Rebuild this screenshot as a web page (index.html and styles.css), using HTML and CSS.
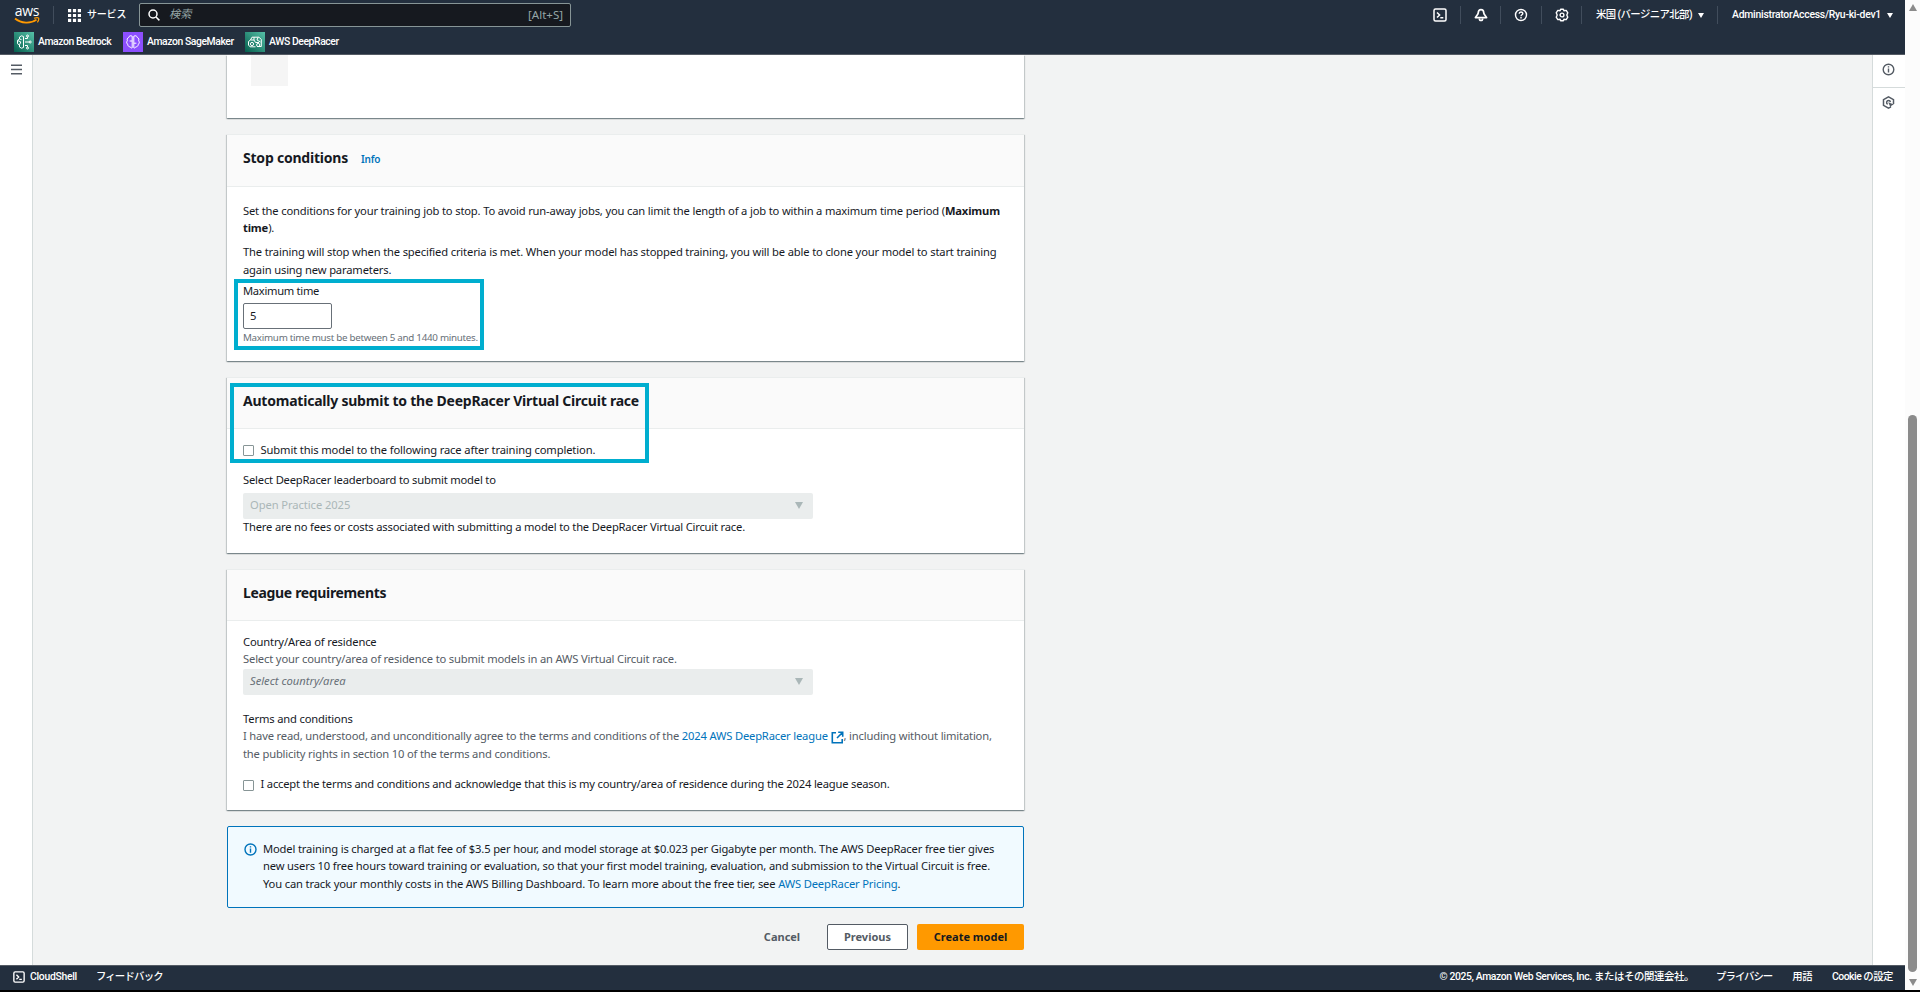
FILE: index.html
```
<!DOCTYPE html>
<html lang="ja">
<head>
    <meta charset="UTF-8" />
    <meta name="viewport" content="width=device-width, initial-scale=1.0"/>
    <title>AWS DeepRacer</title>
    <link rel="stylesheet" href="styles.css">
</head>
<body>
<div class="window">
    <div class="app">
        <header class="topbar">
            <div class="topbar-row">
                <a class="logo">
                    <span class="logo-text">aws</span>
                    <svg class="logo-smile" viewBox="0 0 26 8" fill="none" stroke="#f90">
                        <path d="M1 1.5C7 6.6 17 6.8 22.5 2.6" stroke-width="1.8"/>
                        <path d="M20 1.2C22 .6 24 .5 24.6 1.1C25 1.8 24.3 4 23.4 5.4" stroke-width="1.2"/>
                    </svg>
                </a>
                <span class="divider"></span>
                <a class="services">
                    <svg width="13" height="13" viewBox="0 0 13 13" fill="#fff">
                        <path d="M0 0h3.2v3.2H0zM4.9 0h3.2v3.2H4.9zM9.8 0H13v3.2H9.8zM0 4.9h3.2v3.2H0zM4.9 4.9h3.2v3.2H4.9zM9.8 4.9H13v3.2H9.8zM0 9.8h3.2V13H0zM4.9 9.8h3.2V13H4.9zM9.8 9.8H13V13H9.8z"/>
                    </svg>
                    <span>サービス</span>
                </a>
                <div class="search">
                    <svg width="12" height="12" viewBox="0 0 12 12" fill="none" stroke="#fff" stroke-width="1.5">
                        <circle cx="5" cy="5" r="4"/>
                        <path d="M8 8l3.4 3.4"/>
                    </svg>
                    <span class="search-placeholder">検索</span>
                    <span class="search-key">[Alt+S]</span>
                </div>
                <div class="tools">
                    <a class="tool">
                        <svg width="14" height="14" viewBox="0 0 14 14" fill="none" stroke="#fff" stroke-width="1.5">
                            <rect x="1" y="1" width="12" height="12" rx="1.5"/>
                            <path d="M4 4.5L6.6 7L4 9.5M7.3 9.7H10.3"/>
                        </svg>
                    </a>
                    <a class="tool tool-bell">
                        <svg width="14" height="14" viewBox="0 0 14 14" fill="none" stroke="#fff" stroke-width="1.7">
                            <path d="M7 1.6C5 1.6 4.3 3 4.3 4.6C4.3 6.6 2.6 7.4 1.4 9.6H12.6C11.4 7.4 9.7 6.6 9.7 4.6C9.7 3 9 1.6 7 1.6Z" stroke-linejoin="round"/>
                            <path d="M5.4 10.4C5.4 13.2 8.6 13.2 8.6 10.4"/>
                        </svg>
                    </a>
                    <a class="tool">
                        <svg width="14" height="14" viewBox="0 0 14 14" fill="none" stroke="#fff" stroke-width="1.4">
                            <circle cx="7" cy="7" r="5.5"/>
                            <path d="M5.2 5.7C5.2 3.4 8.8 3.4 8.8 5.6C8.8 6.8 7 6.8 7 8.2M7 9.1V10.4"/>
                        </svg>
                    </a>
                    <a class="tool tool-gear">
                        <svg width="14" height="14" viewBox="0 0 14 14" fill="none" stroke="#fff" stroke-width="1.4" stroke-linejoin="round">
                            <path d="M5.6 1.2H8.4L8.9 2.7L11.2 2.4L12.8 4.8L11.8 7L12.8 9.2L11.2 11.6L8.9 11.3L8.4 12.8H5.6L5.1 11.3L2.8 11.6L1.2 9.2L2.2 7L1.2 4.8L2.8 2.4L5.1 2.7Z"/>
                            <circle cx="7" cy="7" r="1.9"/>
                        </svg>
                    </a>
                    <a class="menu menu-region"><span>米国 (バージニア北部)</span><i class="caret"></i></a>
                    <a class="menu menu-account"><span>AdministratorAccess/Ryu-ki-dev1</span><i class="caret"></i></a>
                </div>
            </div>
            <div class="favorites">
                <a class="favorite bedrock">
                    <svg class="service-icon service-green" viewBox="0 0 20 20" fill="none" stroke="#fff" stroke-width="1">
                        <path d="M9.5 4.5L7.5 3.8L5.5 5V7L3.5 8.3V11.7L5.5 13V15L7.5 16.2L9.5 15.5ZM3.8 8.5L6.8 10L5.5 12.8M5.5 7L7.5 7.6M11 6.5H13.5V4.8M11 10H15.5M11 13.5H13.5V15.2"/>
                        <circle cx="13.5" cy="4" r="1"/><circle cx="16.2" cy="10" r="1"/><circle cx="13.5" cy="16" r="1"/>
                    </svg>
                    <span>Amazon Bedrock</span>
                </a>
                <a class="favorite sagemaker">
                    <svg class="service-icon service-purple" viewBox="0 0 20 20" fill="none" stroke="#fff" stroke-width="1">
                        <path d="M9.2 4.2C7.4 3.2 6 4 5.8 5.4C4.2 6 3.8 7.6 4.4 8.8C3.2 10 3.6 11.8 4.8 12.4C4.8 14.2 6.2 15 7.2 14.8C7.6 16 8.6 16.2 9.2 15.8M10.8 4.2C12.6 3.2 14 4 14.2 5.4C15.8 6 16.2 7.6 15.6 8.8C16.8 10 16.4 11.8 15.2 12.4C15.2 14.2 13.8 15 12.8 14.8C12.4 16 11.4 16.2 10.8 15.8M9.2 4.2V15.8M10.8 4.2V15.8M6.6 9H9.2M10.8 11.2H13.4"/>
                    </svg>
                    <span>Amazon SageMaker</span>
                </a>
                <a class="favorite deepracer">
                    <svg class="service-icon service-green" viewBox="0 0 20 20" fill="none" stroke="#fff" stroke-width="1">
                        <path d="M3.5 13V9.5L5.5 8L7 5.2H14L16.3 7.5V14.5H12M3.5 13L5 14.8H10.5M5.5 8H9L10.5 10.5H14M9 5.2V8M13 5.5L12 8L15.5 10"/>
                        <circle cx="7" cy="12" r="1.6"/><circle cx="13.2" cy="13" r="1.6"/>
                    </svg>
                    <span>AWS DeepRacer</span>
                </a>
            </div>
        </header>

        <div class="workspace">
            <nav class="side-nav">
                <svg width="11" height="11" viewBox="0 0 11 11" stroke="#545b64" stroke-width="1.5">
                    <path d="M0 1.2H11M0 5.5H11M0 9.8H11"/>
                </svg>
            </nav>

            <main class="content">
                <section class="card card-partial">
                    <div class="placeholder-block"></div>
                </section>

                <section class="card card-stop">
                    <div class="card-header">
                        <h2>Stop conditions</h2>
                        <a class="info-link">Info</a>
                    </div>
                    <div class="card-body">
                        <p class="line-a">Set the conditions for your training job to stop. To avoid run-away jobs, you can limit the length of a job to within a maximum time period (<b>Maximum<br>time</b>).</p>
                        <p class="line-b">The training will stop when the specified criteria is met. When your model has stopped training, you will be able to clone your model to start training<br>again using new parameters.</p>
                        <div class="time-field">
                            <label>Maximum time</label>
                            <div class="input">5</div>
                            <div class="hint">Maximum time must be between 5 and 1440 minutes.</div>
                            <div class="highlight highlight-time"></div>
                        </div>
                    </div>
                </section>

                <section class="card card-submit">
                    <div class="card-header">
                        <h2>Automatically submit to the DeepRacer Virtual Circuit race</h2>
                    </div>
                    <div class="card-body">
                        <label class="check"><i class="checkbox"></i><span>Submit this model to the following race after training completion.</span></label>
                        <div class="field-label">Select DeepRacer leaderboard to submit model to</div>
                        <div class="select"><span>Open Practice 2025</span><i class="select-caret"></i></div>
                        <div class="note">There are no fees or costs associated with submitting a model to the DeepRacer Virtual Circuit race.</div>
                    </div>
                    <div class="highlight highlight-submit"></div>
                </section>

                <section class="card card-league">
                    <div class="card-header">
                        <h2>League requirements</h2>
                    </div>
                    <div class="card-body">
                        <div class="field-label">Country/Area of residence</div>
                        <div class="description">Select your country/area of residence to submit models in an AWS Virtual Circuit race.</div>
                        <div class="select select-empty"><span>Select country/area</span><i class="select-caret"></i></div>
                        <div class="field-label terms-label">Terms and conditions</div>
                        <div class="description terms">I have read, understood, and unconditionally agree to the terms and conditions of the <a>2024 AWS DeepRacer league <svg class="external" width="13" height="13" viewBox="0 0 13 13" fill="none" stroke="#0073bb" stroke-width="1.6"><path d="M5 1.8H1.3V11.7H11.2V8M7.2 1.3H11.7V5.8M11.5 1.5L6 7"/></svg></a>, including without limitation,<br>the publicity rights in section 10 of the terms and conditions.</div>
                        <label class="check"><i class="checkbox"></i><span>I accept the terms and conditions and acknowledge that this is my country/area of residence during the 2024 league season.</span></label>
                    </div>
                </section>

                <div class="alert">
                    <svg width="13" height="13" viewBox="0 0 13 13" fill="none" stroke="#0073bb" stroke-width="1.4">
                        <circle cx="6.5" cy="6.5" r="5.5"/>
                        <path d="M6.5 3.2V4.5M6.5 5.6V9.8"/>
                    </svg>
                    <p>Model training is charged at a flat fee of $3.5 per hour, and model storage at $0.023 per Gigabyte per month. The AWS DeepRacer free tier gives<br>new users 10 free hours toward training or evaluation, so that your first model training, evaluation, and submission to the Virtual Circuit is free.<br>You can track your monthly costs in the AWS Billing Dashboard. To learn more about the free tier, see <a>AWS DeepRacer Pricing</a>.</p>
                </div>

                <div class="actions">
                    <button class="btn btn-link">Cancel</button>
                    <button class="btn btn-normal">Previous</button>
                    <button class="btn btn-primary">Create model</button>
                </div>
            </main>

            <aside class="side-tools">
                <div class="side-tool">
                    <svg width="13" height="13" viewBox="0 0 13 13" fill="none" stroke="#545b64" stroke-width="1.4">
                        <circle cx="6.5" cy="6.5" r="5.3"/>
                        <path d="M6.5 3.3V4.6M6.5 5.6V9.6"/>
                    </svg>
                </div>
                <div class="side-tool">
                    <svg width="13" height="13" viewBox="0 0 13 13" fill="none" stroke="#545b64" stroke-width="1.5">
                        <path d="M9 10.9L6.5 12.1L1.5 9.3V3.7L6.5 .9L11.5 3.7V8"/>
                        <path d="M5.6 8.4C3.8 7.2 4.6 4.6 6.5 4.6C7.6 4.6 8.3 5.3 8.4 6.2"/>
                        <path d="M6.2 6.2L12 8.6L9.6 9.4L8.6 11.6Z" fill="#545b64" stroke="none"/>
                    </svg>
                </div>
            </aside>
        </div>

        <footer class="footer">
            <svg width="12" height="12" viewBox="0 0 14 14" fill="none" stroke="#fff" stroke-width="1.6">
                <rect x="1" y="1" width="12" height="12" rx="1.5"/>
                <path d="M4 4.5L6.6 7L4 9.5M7.3 9.7H10.3"/>
            </svg>
            <a class="cloudshell">CloudShell</a>
            <a class="feedback">フィードバック</a>
            <span class="copyright">© 2025, Amazon Web Services, Inc. またはその関連会社。</span>
            <a class="privacy">プライバシー</a>
            <a class="legal">用語</a>
            <a class="cookies">Cookie の設定</a>
        </footer>
    </div>
    <div class="scrollbar">
        <i class="arrow-up"></i>
        <i class="thumb"></i>
        <i class="arrow-down"></i>
    </div>
</div>
</body>
</html>
```
FILE: styles.css
```
:root {
    --navy: #232f3e;
    --bg: #f2f3f3;
    --text: #16191f;
    --text-light: #545b64;
    --link: #0073bb;
    --highlight: #00aecf;
}

* {
    box-sizing: border-box;
}

body {
    font-family: "Noto Sans", "Noto Sans CJK JP", sans-serif;
    font-size: 11.2px;
    line-height: 17.6px;
    letter-spacing: -0.16px;
    margin: 0;
    color: var(--text);
    background: #000;
    overflow: hidden;
}

h2,
p {
    margin: 0;
}

svg {
    display: block;
    flex: none;
}

a {
    color: var(--link);
}

.window {
    display: flex;
    height: 990px;
    white-space: nowrap;
}

.app {
    display: flex;
    flex-direction: column;
    width: 1905px;
}

/* Top navigation */
.topbar {
    height: 55px;
    background: var(--navy);
    border-bottom: 1px solid #545b64;
}

.topbar,
.footer {
    font-family: Roboto, "Noto Sans CJK JP", sans-serif;
    letter-spacing: 0;
}

.topbar a,
.footer a,
.footer {
    color: #fff;
    font-weight: 500;
}

.topbar-row {
    display: flex;
    align-items: center;
    height: 30px;
}

.logo {
    width: 26px;
    margin-left: 14px;
}

.logo-text {
    display: block;
    height: 12px;
    font: 500 14px/11px "Open Sans", sans-serif;
    letter-spacing: -0.3px;
    text-align: center;
}

.logo-smile {
    width: 26px;
    height: 8px;
}

.divider {
    width: 1px;
    height: 18px;
    margin-left: 13px;
    background: #414d5c;
}

.services {
    display: flex;
    align-items: center;
    gap: 6px;
    width: 72px;
    margin-left: 14px;
}

.services span {
    font-size: 10px;
    letter-spacing: -0.2px;
}

.search {
    display: flex;
    align-items: center;
    width: 432px;
    height: 24px;
    margin-left: -1px;
    padding: 0 7px 0 8px;
    background: #16191f;
    border: 1px solid #879596;
    border-radius: 2px;
    color: #95a5a6;
}

.search-placeholder {
    margin-left: 9px;
    font-style: italic;
}

.search-key {
    margin-left: auto;
    font-family: "Noto Sans", sans-serif;
    font-size: 11.5px;
}

.tools {
    display: flex;
    align-items: center;
    height: 18px;
    margin-left: auto;
}

.tool {
    display: flex;
    align-items: center;
    justify-content: center;
    width: 40.5px;
    height: 18px;
    border-right: 1px solid #414d5c;
}

.tool-bell,
.tool-gear {
    padding-left: 2px;
}

.menu {
    display: flex;
    align-items: center;
    height: 18px;
    padding-left: 14px;
    font-size: 10.4px;
}

.menu-region {
    width: 136px;
    border-right: 1px solid #414d5c;
    letter-spacing: -0.6px;
}

.menu-account {
    width: 187px;
    letter-spacing: -0.25px;
}

.caret {
    margin-left: 6px;
    border: 3.5px solid transparent;
    border-top: 5px solid #fff;
    border-bottom: 0;
}

.favorites {
    display: flex;
    padding: 2px 0 0 14px;
}

.favorite {
    display: flex;
    align-items: center;
    gap: 4px;
    height: 20px;
    font-size: 10.4px;
    letter-spacing: -0.42px;
}

.bedrock {
    width: 109px;
}

.sagemaker {
    width: 122px;
}

.service-icon {
    width: 20px;
    height: 20px;
}

.service-green {
    background: linear-gradient(45deg, #055f4e, #56c0a7);
}

.service-purple {
    background: #8c4fff;
}

/* Page frame */
.workspace {
    display: flex;
    height: 910px;
    background: var(--bg);
}

.side-nav {
    width: 33px;
    padding: 9px 0 0 11px;
    background: #fff;
    border-right: 1px solid #d5dbdb;
}

.content {
    width: 1839px;
    padding-left: 194px;
}

.side-tools {
    width: 33px;
    background: #fff;
    border-left: 1px solid #d5dbdb;
}

.side-tool {
    display: flex;
    justify-content: center;
    height: 32px;
    padding: 8px 1px 0 0;
}

.side-tool + .side-tool {
    border-top: 1px solid #d5dbdb;
}

/* Cards */
.card {
    position: relative;
    width: 797px;
    margin-bottom: 16px;
    background: #fff;
    border-top: 1px solid #eaeded;
    box-shadow: 0 1px 1px rgba(0, 28, 36, 0.3), 1px 1px 1px rgba(0, 28, 36, 0.15), -1px 1px 1px rgba(0, 28, 36, 0.15);
}

.card-partial {
    height: 63px;
    padding-left: 24px;
    border-top: 0;
}

.placeholder-block {
    width: 37px;
    height: 31px;
    background: #f5f5f5;
}

.card-stop {
    height: 227px;
}

.card-submit {
    height: 176px;
}

.card-league {
    height: 241px;
}

.card-header {
    display: flex;
    height: 51px;
    padding: 13px 16px 0;
    background: #fafafa;
    border-bottom: 1px solid #eaeded;
}

.card-stop .card-header {
    height: 52px;
}

.card-header h2 {
    font-size: 14px;
    font-weight: 700;
    line-height: 19px;
    letter-spacing: -0.22px;
}

.card-league h2 {
    letter-spacing: -0.34px;
}

.info-link {
    margin: 1px 0 0 13px;
    font-size: 10px;
    font-weight: 600;
    line-height: 20px;
}

.card-body {
    padding: 14.6px 16px 0;
}

.line-a {
    letter-spacing: -0.168px;
}

.line-b {
    margin-top: 6.4px;
}

/* Stop conditions */
.time-field {
    position: relative;
    margin-top: 4px;
}

.time-field label {
    display: block;
    letter-spacing: -0.3px;
}

.input {
    width: 89px;
    height: 26px;
    margin-top: 3px;
    padding: 3px 6px;
    border: 1px solid #687078;
    border-radius: 2px;
}

.hint {
    padding-top: 1px;
    color: #687078;
    font-size: 9.8px;
    line-height: 16px;
    letter-spacing: -0.28px;
}

.highlight {
    position: absolute;
    border: 4px solid var(--highlight);
}

.highlight-time {
    top: -3px;
    left: -9px;
    width: 250px;
    height: 71px;
}

.highlight-submit {
    top: 5px;
    left: 3px;
    width: 419px;
    height: 80px;
}

/* Form fields */
.check {
    display: flex;
    gap: 6.5px;
}

.checkbox {
    width: 11px;
    height: 11px;
    margin-top: 4px;
    border: 1px solid #879596;
    border-radius: 1px;
}

.card-submit .card-body {
    padding-top: 12px;
}

.card-submit .check {
    letter-spacing: -0.13px;
}

.card-submit .field-label {
    margin-top: 12px;
    letter-spacing: -0.19px;
}

.select {
    display: flex;
    align-items: center;
    justify-content: space-between;
    width: 570px;
    height: 26px;
    padding: 0 10px 2px 7px;
    background: #eaeded;
    border-radius: 2px;
    color: #aab7b8;
}

.card-submit .select {
    margin-top: 4.8px;
    letter-spacing: -0.08px;
}

.note {
    margin-top: -1px;
    letter-spacing: -0.19px;
}

.select-empty {
    margin-top: 1.2px;
    letter-spacing: 0;
}

.select-empty span {
    color: #687078;
    font-style: italic;
}

.select-caret {
    margin-top: 1px;
    border: 4.5px solid transparent;
    border-top: 7px solid #aab7b8;
    border-bottom: 0;
}

.card-league .card-body {
    padding-top: 12px;
}

.description {
    margin-top: -0.4px;
    color: var(--text-light);
}

.terms {
    letter-spacing: -0.175px;
}

.terms-label {
    margin-top: 15px;
}

.external {
    display: inline-block;
    vertical-align: -4px;
}

.card-league .check {
    margin-top: 12.5px;
    letter-spacing: -0.195px;
}

.card-league .checkbox {
    margin-top: 5px;
}

/* Pricing notice */
.alert {
    display: flex;
    gap: 6.5px;
    width: 797px;
    height: 82px;
    padding: 12.6px 16px 0 15.5px;
    background: #f1faff;
    border: 1px solid var(--link);
    border-radius: 2px;
    letter-spacing: -0.155px;
}

.alert svg {
    margin-top: 3px;
}

.actions {
    display: flex;
    justify-content: flex-end;
    width: 797px;
    margin-top: 16px;
}

.btn {
    height: 26px;
    padding: 0 0 2px;
    border: 1px solid transparent;
    border-radius: 2px;
    background: transparent;
    color: var(--text-light);
    font: 700 11px "Noto Sans", sans-serif;
    letter-spacing: 0;
}

.btn-link {
    width: 70px;
    margin-right: 10px;
}

.btn-normal {
    width: 81px;
    margin-right: 9px;
    background: #fff;
    border-color: var(--text-light);
}

.btn-primary {
    width: 107px;
    background: #f90;
    color: var(--text);
}

/* Footer */
.footer {
    display: flex;
    align-items: center;
    height: 25px;
    padding: 0 12px 2px 13px;
    background: var(--navy);
    border-top: 1px solid #545b64;
    font-size: 10.4px;
}

.cloudshell {
    margin-left: 5px;
    letter-spacing: -0.3px;
}

.feedback {
    margin-left: 19px;
    letter-spacing: -0.8px;
}

.copyright {
    margin-left: auto;
    letter-spacing: -0.38px;
}

.privacy {
    margin-left: 22px;
    letter-spacing: -1px;
}

.legal,
.cookies {
    margin-left: 20px;
    letter-spacing: -0.5px;
}

/* Page scrollbar */
.scrollbar {
    display: flex;
    flex-direction: column;
    align-items: center;
    width: 15px;
    height: 990px;
    background: #fcfcfc;
}

.arrow-up {
    margin-top: 4px;
    border: 4.5px solid transparent;
    border-bottom: 7px solid #8b8b8b;
    border-top: 0;
}

.thumb {
    width: 9px;
    height: 557px;
    margin-top: 404px;
    background: #8b8b8b;
    border-radius: 5px;
}

.arrow-down {
    margin-top: 7px;
    border: 4.5px solid transparent;
    border-top: 7px solid #8b8b8b;
    border-bottom: 0;
}
```
